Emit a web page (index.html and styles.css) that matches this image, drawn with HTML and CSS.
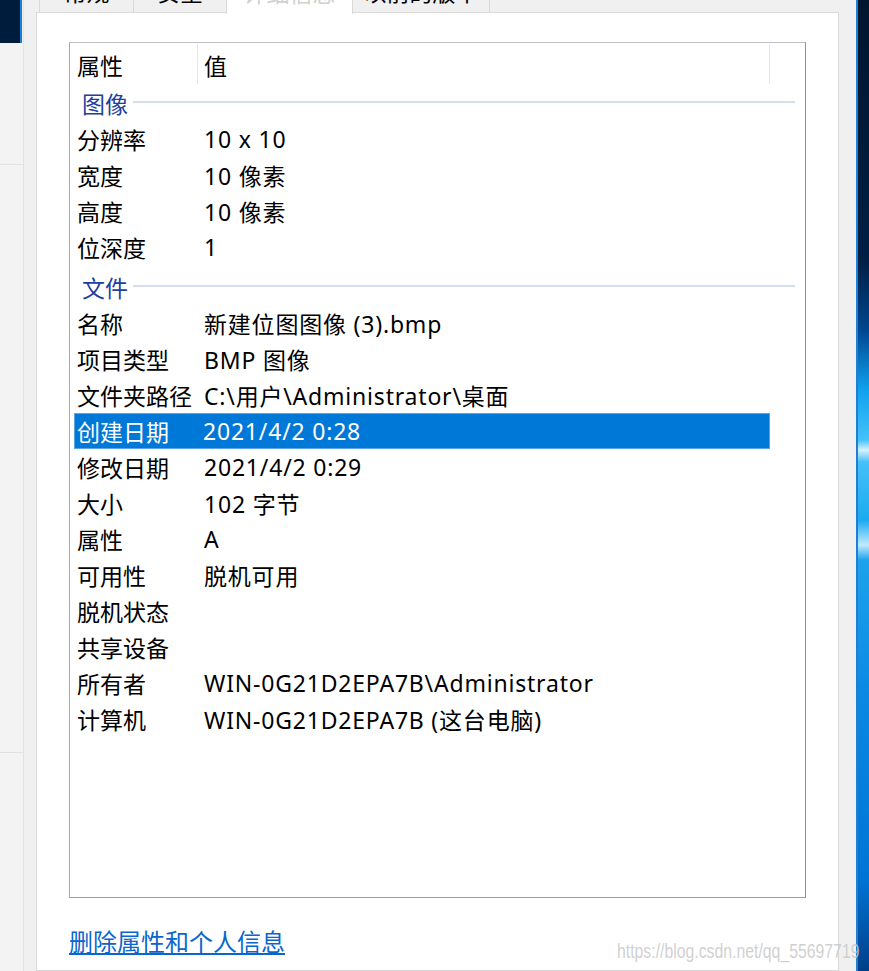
FILE: index.html
```html
<!DOCTYPE html>
<html lang="zh-CN">
<head>
    <meta charset="UTF-8">
    <meta name="viewport" content="width=device-width, initial-scale=1.0">
    <title>属性 - 详细信息</title>
    <link rel="stylesheet" href="styles.css">
</head>
<body>
<div class="screen">
    <!-- desktop corner and the window behind -->
    <div class="left-strip">
        <div class="desk-corner"></div>
        <div class="back-window">
            <div class="back-row first"></div>
            <div class="back-row second"></div>
        </div>
    </div>

    <div class="dialog">
        <div class="tabs">
            <div class="tab tab-general">常规</div>
            <div class="tab tab-security">安全</div>
            <div class="tab tab-details active">详细信息</div>
            <div class="tab tab-versions">以前的版本</div>
        </div>

        <div class="panel">
            <div class="list">
                <div class="list-head">
                    <div class="col-name">属性</div>
                    <div class="col-value">值</div>
                    <div class="col-rest"></div>
                </div>

                <div class="group"><span>图像</span></div>
                <div class="row"><div class="name">分辨率</div><div class="value">10 x 10</div></div>
                <div class="row"><div class="name">宽度</div><div class="value">10 像素</div></div>
                <div class="row"><div class="name">高度</div><div class="value">10 像素</div></div>
                <div class="row"><div class="name">位深度</div><div class="value">1</div></div>

                <div class="group group-file"><span>文件</span></div>
                <div class="row"><div class="name">名称</div><div class="value">新建位图图像 (3).bmp</div></div>
                <div class="row"><div class="name">项目类型</div><div class="value">BMP 图像</div></div>
                <div class="row"><div class="name">文件夹路径</div><div class="value">C:\用户\Administrator\桌面</div></div>
                <div class="row selected"><div class="name">创建日期</div><div class="value">2021/4/2 0:28</div></div>
                <div class="row"><div class="name">修改日期</div><div class="value">2021/4/2 0:29</div></div>
                <div class="row"><div class="name">大小</div><div class="value">102 字节</div></div>
                <div class="row"><div class="name">属性</div><div class="value">A</div></div>
                <div class="row"><div class="name">可用性</div><div class="value">脱机可用</div></div>
                <div class="row"><div class="name">脱机状态</div><div class="value"></div></div>
                <div class="row"><div class="name">共享设备</div><div class="value"></div></div>
                <div class="row"><div class="name">所有者</div><div class="value">WIN-0G21D2EPA7B\Administrator</div></div>
                <div class="row"><div class="name">计算机</div><div class="value">WIN-0G21D2EPA7B (这台电脑)</div></div>
            </div>

            <a class="remove-link" href="#">删除属性和个人信息</a>
        </div>
    </div>

    <div class="right-strip"></div>

    <div class="watermark">https://blog.csdn.net/qq_55697719</div>
</div>
</body>
</html>
```

FILE: styles.css
```css
body {
    margin: 0;
    padding: 0;
    font-family: "Noto Sans", "Noto Sans CJK SC", sans-serif;
    overflow: hidden;
    background-color: #f0f0f0;
}
.screen {
    display: flex;
    height: 971px;
    position: relative;
    overflow: hidden;
}

/* left edge */
.left-strip {
    width: 23px;
    display: flex;
    flex-direction: column;
    background-color: #f0f0f0;
}
.desk-corner {
    width: 22px;
    height: 43px;
    box-sizing: border-box;
    background-color: #001c3c;
    border-right: 2px solid #1b7fd6;
}
.back-window {
    flex: 1;
    background-color: #f3f3f3;
}
.back-row {
    border-bottom: 1px solid #e1e1e1;
}
.back-row.first {
    height: 121px;
}
.back-row.second {
    height: 587px;
}

/* dialog */
.dialog {
    width: 833px;
    box-sizing: border-box;
    background-color: #f0f0f0;
    border-left: 1px solid #e3e3e3;
    padding: 0 17px 0 12px;
    display: flex;
    flex-direction: column;
}
.tabs {
    display: flex;
    height: 44px;
    margin-top: -32px;
    padding-left: 4px;
}
.tab {
    height: 44px;
    box-sizing: border-box;
    border: 1px solid #d9d9d9;
    border-bottom: none;
    margin-left: -1px;
    background-color: #f0f0f0;
    display: flex;
    align-items: center;
    justify-content: center;
    font-size: 23px;
    color: #000;
}
.tab-general { width: 95px; }
.tab-security { width: 94px; }
.tab-details { width: 127px; }
.tab-versions { width: 138px; }
.tab.active {
    height: 46px;
    background-color: #fff;
    color: #d0d0d0;
    position: relative;
    z-index: 1;
}
.panel {
    flex: 1;
    background-color: #fff;
    border: 1px solid #d9d9d9;
    padding: 29px 32px 0;
}

/* list view */
.list {
    height: 856px;
    box-sizing: border-box;
    border: 1px solid;
    border-color: #bdbdc3 #8e8e96 #9c9ca2 #a9a9ae;
    font-size: 23px;
    color: #000;
}
.list-head {
    display: flex;
    align-items: center;
    height: 42px;
}
.list-head > div {
    height: 40px;
    box-sizing: border-box;
    padding-top: 1px;
    display: flex;
    align-items: center;
}
.col-name {
    width: 128px;
    padding-left: 7px;
    border-right: 1px solid #e5e5e5;
}
.col-value {
    width: 572px;
    padding-left: 6px;
    border-right: 1px solid #e5e5e5;
}
.col-rest {
    flex: 1;
}
.group {
    height: 36px;
    margin: 0 10px 0 4px;
    padding-left: 8px;
    display: flex;
    align-items: center;
    color: #1e3f9e;
}
.group::after {
    content: "";
    flex: 1;
    height: 2px;
    margin: 0 0 3px 5px;
    background-color: #d6ddee;
}
.group-file {
    margin-top: 4px;
}
.row {
    height: 36px;
    box-sizing: border-box;
    margin: 0 35px 0 4px;
    display: flex;
    align-items: center;
}
.row .name {
    width: 127px;
    padding-left: 3px;
    white-space: nowrap;
}
.row .value {
    white-space: nowrap;
    letter-spacing: 0.8px;
}
.row.selected {
    background-color: #0078d7;
    border: 1px solid #5aa5e6;
    color: #fff;
}
.row.selected .name {
    width: 126px;
    padding-left: 2px;
}

.remove-link {
    display: block;
    width: max-content;
    margin-top: 28px;
    font-size: 24px;
    line-height: 32px;
    color: #0a66cc;
    text-decoration: underline;
}

/* desktop on the right */
.right-strip {
    width: 13px;
    box-sizing: border-box;
    border-left: 2px solid #1e7fd6;
    background: linear-gradient(to bottom, #00162e 0, #001f44 260px, #00468f 330px, #10a2ee 390px, #44c2fa 440px, #d6f2ff 450px, #46c0f8 462px, #1aaaf0 520px, #bfeaff 545px, #1ca3ec 560px, #0a88e2 700px, #0074d4 880px, #003f88 971px);
}

.watermark {
    position: absolute;
    left: 617px;
    top: 940px;
    font-family: "Liberation Sans", Arial, sans-serif;
    font-size: 20px;
    color: rgba(200, 200, 200, 0.85);
    white-space: nowrap;
    transform: scaleX(0.79);
    transform-origin: left center;
}
```
